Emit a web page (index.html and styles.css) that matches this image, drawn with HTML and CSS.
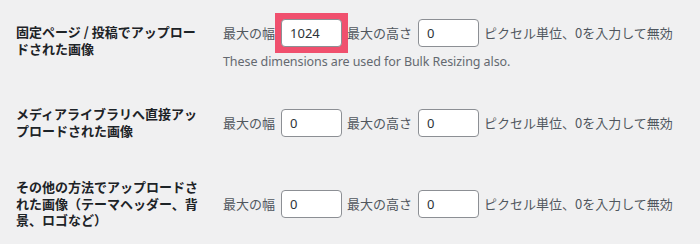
FILE: index.html
```html
<!DOCTYPE html>
<html lang="ja">
<head>
<meta charset="utf-8">
<title>Resize settings</title>
<link rel="stylesheet" href="styles.css">
</head>
<body>
<div class="form-table">
  <div class="row">
    <div class="th">固定ページ / 投稿でアップロードされた画像</div>
    <div class="td">
      <div class="fields">
        <span class="lbl">最大の幅</span>
        <span class="highlight"><input class="inp" type="text" value="1024"></span>
        <span class="lbl lbl-h">最大の高さ</span>
        <input class="inp" type="text" value="0">
        <span class="lbl lbl-note">ピクセル単位、0を入力して無効</span>
      </div>
      <p class="desc">These dimensions are used for Bulk Resizing also.</p>
    </div>
  </div>
  <div class="row">
    <div class="th">メディアライブラリへ直接アップロードされた画像</div>
    <div class="td">
      <div class="fields">
        <span class="lbl">最大の幅</span>
        <input class="inp" type="text" value="0">
        <span class="lbl lbl-h">最大の高さ</span>
        <input class="inp" type="text" value="0">
        <span class="lbl lbl-note">ピクセル単位、0を入力して無効</span>
      </div>
    </div>
  </div>
  <div class="row">
    <div class="th">その他の方法でアップロードされた画像（テーマヘッダー、背景、ロゴなど）</div>
    <div class="td">
      <div class="fields">
        <span class="lbl">最大の幅</span>
        <input class="inp" type="text" value="0">
        <span class="lbl lbl-h">最大の高さ</span>
        <input class="inp" type="text" value="0">
        <span class="lbl lbl-note">ピクセル単位、0を入力して無効</span>
      </div>
    </div>
  </div>
</div>
</body>
</html>
```

FILE: styles.css
```css
html, body {
  margin: 0;
  padding: 0;
  background: #f0f0f1;
}
body {
  font-family: "Noto Sans", "Noto Sans CJK JP", sans-serif;
  font-size: 13px;
  color: #1d2327;
  width: 700px;
  height: 244px;
  overflow: hidden;
}
.form-table {
  padding: 4px 0 0 16px;
}
.row {
  display: grid;
  grid-template-columns: 197px 1fr;
}
.th {
  align-self: start;
  width: 187px;
  padding: 20px 10px 20px 0;
  font-family: "Noto Sans CJK JP", sans-serif;
  font-weight: 700;
  font-size: 13px;
  line-height: 16.5px;
  color: #1d2327;
  line-break: strict;
}
.td {
  align-self: center;
  padding: 15px 10px;
}
.fields {
  display: flex;
  align-items: center;
  height: 28px;
}
.lbl {
  font-family: "Noto Sans CJK JP", sans-serif;
  font-size: 13px;
  color: #50575e;
  line-height: 16px;
  white-space: nowrap;
}
.lbl-h {
  margin-left: 5px;
}
.lbl-note {
  margin-left: 5px;
}
.inp {
  box-sizing: border-box;
  width: 61px;
  height: 28px;
  margin: 0 0 0 6px;
  padding: 0 8px;
  border: 1px solid #8c8f94;
  border-radius: 4px;
  background: #fff;
  font-family: "Noto Sans", sans-serif;
  font-size: 13px;
  color: #2c3338;
  outline: none;
}
.highlight {
  display: flex;
  padding: 6px;
  margin: -6px -6px -6px 0;
  background: #f0506e;
}
.highlight .inp {
  margin: 0;
}
.desc {
  margin: 6px 0 0 0;
  font-family: "Noto Sans", sans-serif;
  font-size: 12.5px;
  letter-spacing: -0.08px;
  line-height: 18px;
  color: #646970;
}
```
